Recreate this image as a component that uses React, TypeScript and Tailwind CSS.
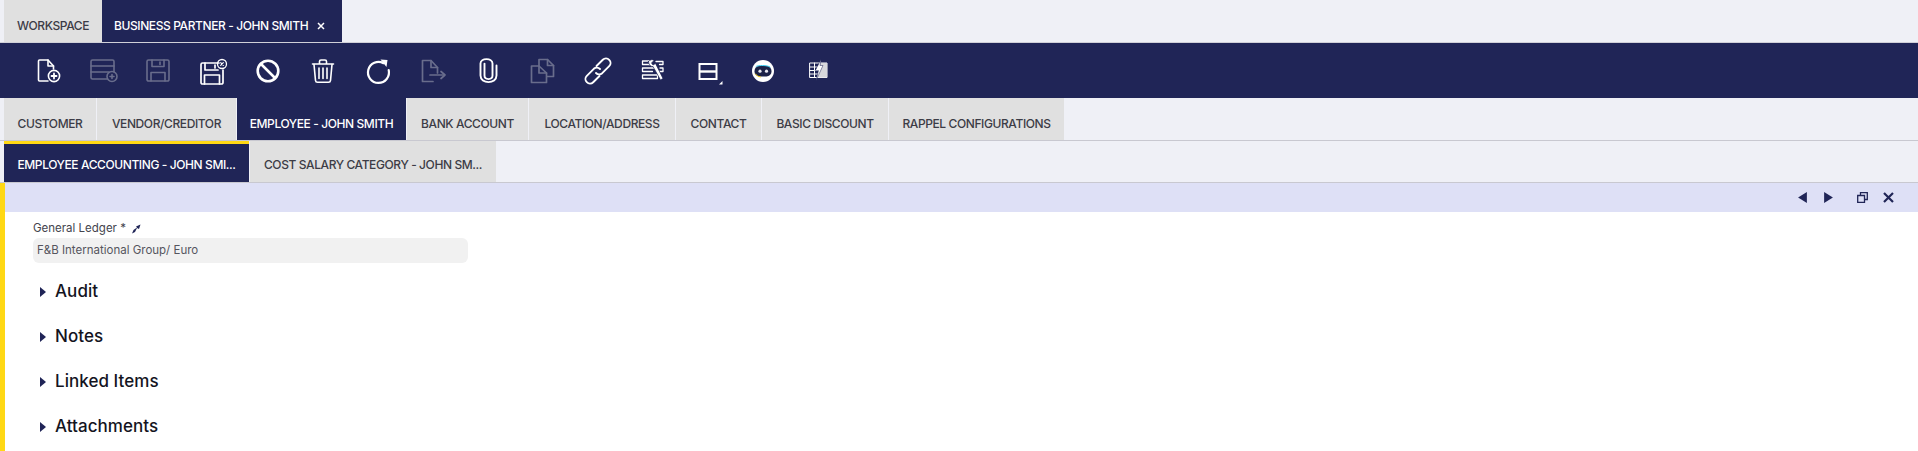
import React from "react";

const NAVY = "#202557";

function Svg({ children, w = 36, h = 36 }: { children: React.ReactNode; w?: number; h?: number }) {
  return (
    <svg width={w} height={h} viewBox={`0 0 ${w} ${h}`} fill="none" strokeLinecap="round" strokeLinejoin="round">
      {children}
    </svg>
  );
}

const W = "#ffffff";
const D = "#696d8c";

const icons: React.ReactNode[] = [
  // new document
  <Svg key="a">
    <g stroke={W} strokeWidth="1.6">
      <path d="M18 28H9.5a1 1 0 0 1-1-1V8a1 1 0 0 1 1-1h8.5l5.5 6v3" />
      <path d="M18 7v6h5.5" />
      <circle cx="24" cy="23" r="5.6" />
    </g>
    <path d="M24 20.5v5M21.5 23h5" stroke={W} strokeWidth="1.8" />
  </Svg>,
  // card add
  <Svg key="b">
    <g stroke={D} strokeWidth="1.6">
      <path d="M22 26H7.5A1.5 1.5 0 0 1 6 24.5v-16A1.5 1.5 0 0 1 7.5 7h20A1.5 1.5 0 0 1 29 8.5V19" />
      <path d="M6 13h23M6 19h18" />
      <circle cx="27" cy="23.5" r="5" />
      <path d="M27 21.5v4M25 23.5h4" />
    </g>
  </Svg>,
  // save
  <Svg key="c">
    <g stroke={D} strokeWidth="1.6">
      <path d="M8.5 7h19a1.5 1.5 0 0 1 1.500 1.500V26.500a1.500 1.500 0 0 1-1.500 1.500h-19A1.500 1.500 0 0 1 7 26.500V8.500A1.500 1.500 0 0 1 8.500 7z" />
      <path d="M12 7v6.500h12V7M11 28v-8.500h14V28M20 9v2.500" />
    </g>
  </Svg>,
  // save and close
  <Svg key="d">
    <g stroke={W} strokeWidth="1.7">
      <path d="M24 10H7.500A1.500 1.500 0 0 0 6 11.500V29.500A1.500 1.500 0 0 0 7.500 31h19a1.500 1.500 0 0 0 1.500-1.500V17" />
      <path d="M10 10v7h13M9.500 31v-9h15v9M20 12v3" />
      <circle cx="27" cy="11" r="4.500" strokeWidth="1.300" />
    </g>
    <path d="M25.700 9.700l2.600 2.600M28.300 9.700l-2.600 2.600" stroke={W} strokeWidth="1.200" />
  </Svg>,
  // ban
  <Svg key="e">
    <circle cx="18" cy="18" r="10.300" stroke={W} strokeWidth="2.600" />
    <path d="M11 11l14 14" stroke={W} strokeWidth="2.600" />
  </Svg>,
  // trash
  <Svg key="f">
    <g stroke={W} strokeWidth="1.600">
      <path d="M7.500 11h21M14.500 10.500V8.500A1.500 1.500 0 0 1 16 7h4a1.500 1.500 0 0 1 1.500 1.500v2" />
      <path d="M9 11.500l1.500 16a2 2 0 0 0 2 1.800h11a2 2 0 0 0 2-1.800l1.500-16" />
      <path d="M14 15v10.500M18 15v10.500M22 15v10.500" />
    </g>
  </Svg>,
  // refresh
  <Svg key="g">
    <path d="M23.500 10.200A10.500 10.500 0 1 0 28.700 17" stroke={W} strokeWidth="2.200" />
    <path d="M20.500 6.500l7 0.500-1 7z" fill={W} />
  </Svg>,
  // export doc
  <Svg key="h">
    <g stroke={D} strokeWidth="1.700">
      <path d="M18 28.500H7.500V7.500H16l6.500 7V20" />
      <path d="M16 7.500v7h6.500" />
      <path d="M15 22h14" />
    </g>
    <path d="M26 18.500l4 3.500-4 3.500" stroke={D} strokeWidth="1.700" />
  </Svg>,
  // paperclip
  <Svg key="i">
    <path
      d="M14.500 11v13c0 5 8 5 8 0V11c0-6.500-12-6.500-12 0v13c0 9.500 16 9.500 16 0V13"
      stroke={W}
      strokeWidth="1.900"
      transform="translate(0 0.500) scale(1 0.92)"
    />
  </Svg>,
  // copy
  <Svg key="j">
    <g stroke={D} strokeWidth="1.700">
      <path d="M14 13V6.500h8.500l6 6V23.500H22" />
      <path d="M22.500 6.500v6h6" />
      <path d="M6.500 13H14l7.500 7v9.500h-15z" />
      <path d="M14 13.500v6.500h7.500" />
    </g>
  </Svg>,
  // link
  <Svg key="k">
    <g stroke={W} strokeWidth="1.900">
      <path d="M16.500 13L22.800 6.800A4.500 4.500 0 0 1 29.200 13.200L22.200 20.200A4.500 4.500 0 0 1 16 20" />
      <path d="M19.500 23L13.200 29.200A4.500 4.500 0 0 1 6.800 22.800L13.800 15.800A4.500 4.500 0 0 1 20 16" />
    </g>
  </Svg>,
  // list tool
  <Svg key="l">
    <g stroke={W} strokeWidth="1.300">
      <path d="M7.500 8H15M7.500 8v3.500H15M21 8.500h7v3h-3.500M7.500 15h12M7.500 15v3.500h10M7.500 22h15v3.500h-15z" />
      <path d="M22 18.500h6v-3.500h-3" />
    </g>
    <path d="M13.500 8.500c1.500-2 4.500-2.500 5.500-1l-2.500 2.500 1.500 2 2.500-1.500 7.500 15-2.500 1.500-7.500-13.500c-2.500 0.500-4.500-2.500-4.500-5z" fill={W} stroke={NAVY} strokeWidth="0.700" />
  </Svg>,
  // rows
  <Svg key="m">
    <rect x="9.500" y="11" width="17" height="15" stroke={W} strokeWidth="2" strokeLinejoin="miter" />
    <path d="M9.500 18.500h17" stroke={W} strokeWidth="2.400" strokeLinecap="butt" />
    <path d="M32.500 28v3.500h-3.500z" fill={W} />
  </Svg>,
  // bot
  <Svg key="n">
    <circle cx="18" cy="18" r="11" fill="#ffffff" />
    <rect x="9.500" y="13" width="17" height="10.500" rx="5" fill="#1b2147" />
    <path d="M10.500 21a6 6 0 0 0 5 3" stroke="#f2c916" strokeWidth="1" />
    <path d="M11 13.500c1-1.500 12-1.500 14 0.500" stroke="#35c5e8" strokeWidth="1" />
    <circle cx="15" cy="18.200" r="1.600" fill="#e8e8f0" />
    <circle cx="21.500" cy="18.200" r="1.600" fill="#e8e8f0" />
  </Svg>,
  // doc bolt
  <Svg key="o">
    <g transform="translate(1.500 0)">
      <rect x="8.500" y="10" width="17" height="14.500" stroke="#ffffff" strokeWidth="1" />
      <path d="M8.500 14h11M8.500 17.500h10M8.500 21h9M13 10v14.500" stroke="#ffffff" strokeWidth="1" />
      <path d="M19 10h6.500V24.500H16z" fill="#d8d8dc" />
      <path d="M19.500 6.500l-1 6h3l-7 15 2.500-10h-3z" fill="#ffffff" stroke={NAVY} strokeWidth="0.500" />
    </g>
  </Svg>,
];

function Tab({ label, width, active, className = "" }: { label: string; width: string; active?: boolean; className?: string }) {
  return (
    <div
      className={`flex items-center justify-center whitespace-nowrap text-[12px] font-medium tracking-[-0.4px] ${width} ${
        active ? "bg-[#202557] text-white" : "bg-[#e0e0e0] text-[#3c3c46]"
      } ${className}`}
    >
      {label}
    </div>
  );
}

function Section({ label }: { label: string }) {
  return (
    <div className="flex h-[45px] items-center">
      <svg width="6" height="10" viewBox="0 0 6 10" className="ml-[7px] mr-[9px]">
        <path d="M0 0l6 5L0 10z" fill="#202557" />
      </svg>
      <span className="text-[17px] font-medium tracking-[0.05px] text-[#14141e]">{label}</span>
    </div>
  );
}

export default function App() {
  return (
    <div className="h-[451px] w-[1918px] overflow-hidden bg-[#eff0f6] font-['Inter',sans-serif]">
      {/* window tabs */}
      <div className="flex h-[43px] items-stretch border-b border-[#d0d0d8] pl-[4px]">
        <Tab label="WORKSPACE" width="w-[98px]" className="pt-[9px]" />
        <div className="flex w-[240px] items-center whitespace-nowrap bg-[#202557] pl-[12px] pt-[9px] text-[12px] font-medium tracking-[-0.4px] text-white">
          BUSINESS PARTNER - JOHN SMITH
          <svg width="8" height="8" viewBox="0 0 8 8" className="ml-auto mr-[17px]">
            <path d="M1 1l6 6M7 1L1 7" stroke="#ffffff" strokeWidth="1.500" />
          </svg>
        </div>
      </div>

      {/* toolbar */}
      <div className="flex h-[55px] items-center bg-[#202557] pl-[20px]">
        {icons.map((icon, i) => (
          <div key={i} className="flex h-[45px] w-[55px] items-center justify-center">
            {icon}
          </div>
        ))}
      </div>

      {/* level one tabs */}
      <div className="flex h-[43px] items-stretch gap-px border-b border-[#c8c8d0] pl-[4px]">
        <Tab label="CUSTOMER" width="w-[92px]" className="pt-[9px]" />
        <Tab label="VENDOR/CREDITOR" width="w-[139px]" className="pt-[9px]" />
        <Tab label="EMPLOYEE - JOHN SMITH" width="w-[169px]" active className="pt-[9px]" />
        <Tab label="BANK ACCOUNT" width="w-[121px]" className="pt-[9px]" />
        <Tab label="LOCATION/ADDRESS" width="w-[146px]" className="pt-[9px]" />
        <Tab label="CONTACT" width="w-[85px]" className="pt-[9px]" />
        <Tab label="BASIC DISCOUNT" width="w-[126px]" className="pt-[9px]" />
        <Tab label="RAPPEL CONFIGURATIONS" width="w-[175px]" className="pt-[9px]" />
      </div>

      {/* level two tabs */}
      <div className="flex h-[42px] items-stretch gap-px border-b border-[#c8c8d0] pl-[4px]">
        <Tab label="EMPLOYEE ACCOUNTING - JOHN SMI..." width="w-[245px]" active className="border-t-[3px] border-[#ffd814] pt-[3px]" />
        <Tab label="COST SALARY CATEGORY - JOHN SM..." width="w-[246px]" className="pt-[7px]" />
      </div>

      {/* form */}
      <div className="h-[268px] border-l-[5px] border-[#ffd814] bg-white">
        <div className="flex h-[29px] items-center justify-end bg-[#dee0f6] pr-[24px]">
          <svg width="9" height="11" viewBox="0 0 8 10" className="mr-[17px]">
            <path d="M8 0v10L0 5z" fill="#202557" />
          </svg>
          <svg width="9" height="11" viewBox="0 0 8 10" className="mr-[24px]">
            <path d="M0 0v10l8-5z" fill="#202557" />
          </svg>
          <svg width="11" height="11" viewBox="0 0 11 11" className="mr-[15px]">
            <path d="M3.500 3V.7h6.800v6.800H8M.7 3.500h6.800v6.800H.7z" fill="none" stroke="#202557" strokeWidth="1.300" />
          </svg>
          <svg width="11" height="11" viewBox="0 0 11 11">
            <path d="M1 1l9 9M10 1l-9 9" stroke="#202557" strokeWidth="2.200" />
          </svg>
        </div>
        <div className="pl-[28px]">
          <div className="flex h-[26px] items-center pt-[8px] text-[11.5px] text-[#44444e]">
            General Ledger *
            <svg width="10" height="10" viewBox="0 0 10 10" className="ml-[5px]">
              <path d="M1 9.500l3-1.500 2-4 2 1 1.500-4.500L5 2.500l1 1-3.500 2.500z" fill="#202557" />
            </svg>
          </div>
          <div className="flex h-[25px] w-[435px] items-center rounded-[6px] bg-[#f1f1f1] pl-[4px] text-[11.5px] text-[#55555e]">
            F&amp;B International Group/ Euro
          </div>
          <div className="pt-[6px]">
            <Section label="Audit" />
            <Section label="Notes" />
            <Section label="Linked Items" />
            <Section label="Attachments" />
          </div>
        </div>
      </div>
    </div>
  );
}
